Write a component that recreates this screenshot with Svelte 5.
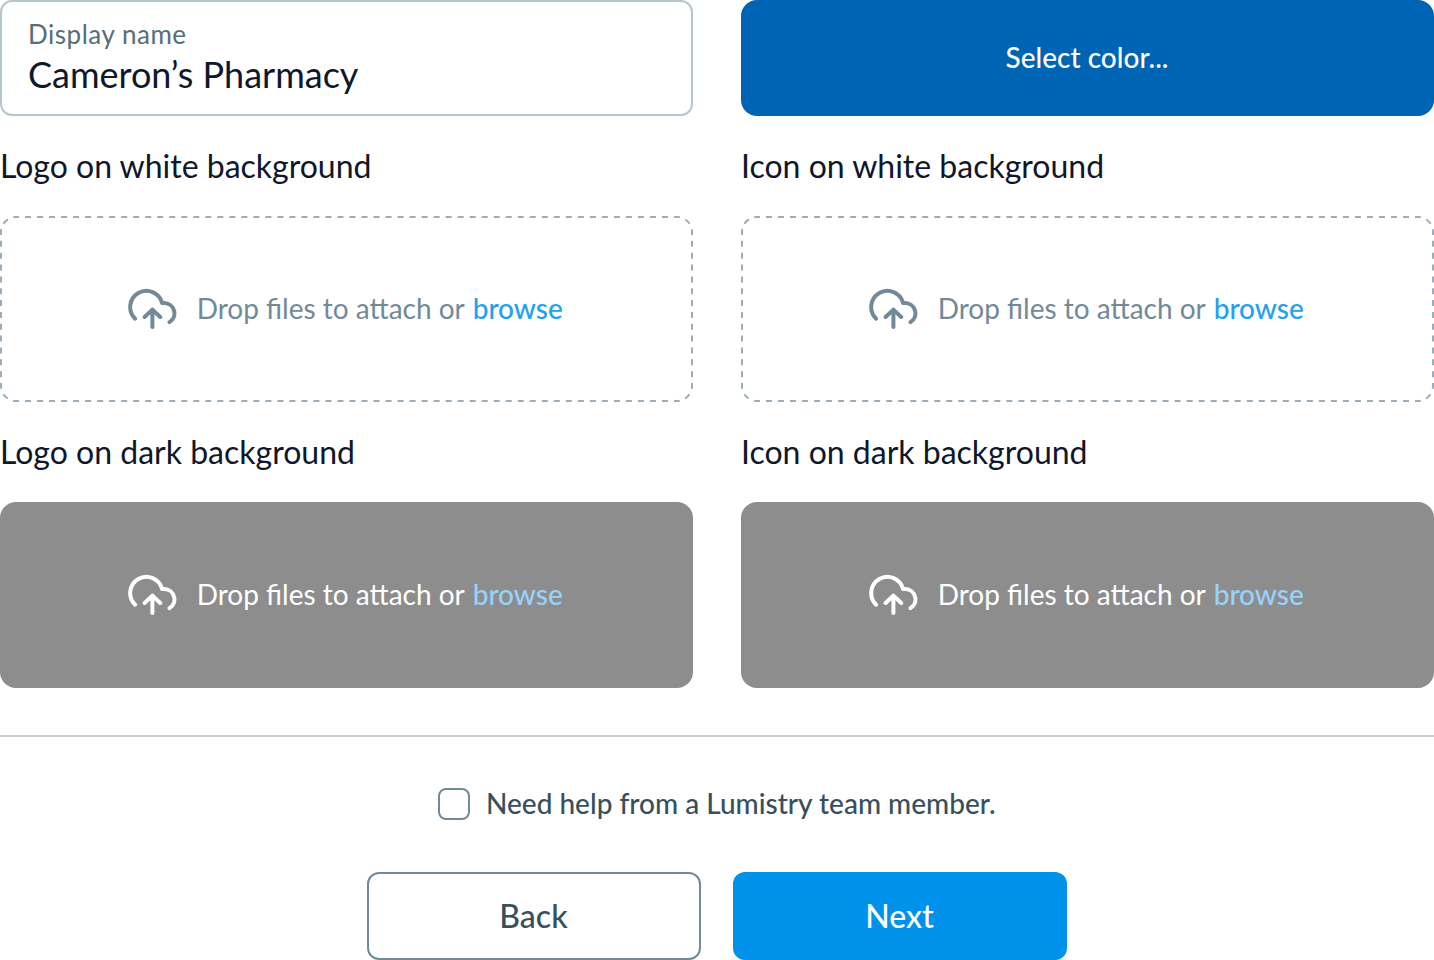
<script>
  const zones = [
    { title: 'Logo on white background', dark: false },
    { title: 'Icon on white background', dark: false },
    { title: 'Logo on dark background', dark: true },
    { title: 'Icon on dark background', dark: true },
  ];
</script>

<main>
  <div class="grid">
    <label class="field">
      <span class="caption">Display name</span>
      <span class="value">Cameron’s Pharmacy</span>
    </label>
    <button class="color">Select color...</button>

    {#each zones as zone}
      <section>
        <h2>{zone.title}</h2>
        <div class="drop" class:dark={zone.dark}>
          {#if !zone.dark}
            <svg class="outline" viewBox="0 0 693 186" aria-hidden="true">
              <path class="h" d="M16 1H677M16 185H677" />
              <path class="v" d="M1 16V170M692 16V170" />
              <path class="c" d="M1 16A15 15 0 0 1 16 1M677 1A15 15 0 0 1 692 16M692 170A15 15 0 0 1 677 185M16 185A15 15 0 0 1 1 170" />
            </svg>
          {/if}
          <svg class="cloud" viewBox="0 0 52 44" aria-hidden="true">
            <path d="M9.1 31.7A16.2 16.2 0 1 1 36.1 16.1H38.4A10.25 10.25 0 0 1 43.5 35.1M26.4 40V22.6M18.6 30L26.4 22.6L34.2 30" />
          </svg>
          <p>Drop files to attach or <a href="#browse">browse</a></p>
        </div>
      </section>
    {/each}
  </div>

  <hr />

  <label class="help"><span class="box"></span><span class="help-text">Need help from a Lumistry team member.</span></label>

  <div class="actions">
    <button class="back">Back</button>
    <button class="next">Next</button>
  </div>
</main>

<style>
  :global(body) {
    margin: 0;
    background: #fff;
  }
  main {
    width: 1434px;
    height: 960px;
    overflow: hidden;
    font-family: Lato, sans-serif;
    color: #0f172a;
    display: flex;
    flex-direction: column;
  }
  button {
    font-family: inherit;
    border: 0;
    padding: 0;
  }
  .grid {
    display: grid;
    grid-template-columns: 693px 693px;
    column-gap: 48px;
  }
  .field {
    box-sizing: border-box;
    height: 116px;
    border: 2px solid #b8c5cd;
    border-radius: 12px;
    padding: 16px 26px;
    display: flex;
    flex-direction: column;
  }
  .caption {
    font-size: 26px;
    line-height: 33px;
    letter-spacing: 0.52px;
    color: #546e7a;
  }
  .value {
    font-size: 36px;
    line-height: 46px;
  }
  .color {
    height: 116px;
    border-radius: 16px;
    background: #0064b4;
    color: #fff;
    font-size: 28px;
    font-weight: 500;
    padding: 0 1px 2px 0;
  }
  section {
    display: flex;
    flex-direction: column;
  }
  h2 {
    margin: 0;
    font-weight: 400;
    font-size: 32px;
    line-height: 40px;
    padding: 30px 0;
  }
  .drop {
    position: relative;
    height: 186px;
    border-radius: 16px;
    display: flex;
    align-items: center;
    padding-left: 126px;
    box-sizing: border-box;
    color: #728a98;
  }
  .drop.dark {
    background: #8d8d8d;
    color: #fff;
  }
  .outline {
    position: absolute;
    inset: 0;
    width: 693px;
    height: 186px;
    fill: none;
    stroke: #9aadb8;
    stroke-width: 2;
    stroke-dashoffset: 3;
  }
  .h {
    stroke-dasharray: 6 6.018;
  }
  .v {
    stroke-dasharray: 6 5.846;
  }
  .c {
    stroke-dasharray: 6 5.78;
  }
  .cloud {
    width: 52px;
    height: 44px;
    flex: none;
    fill: none;
    stroke: currentColor;
    stroke-width: 4;
    stroke-linecap: round;
    stroke-linejoin: round;
  }
  p {
    margin: 0 0 2px 18.7px;
    font-size: 28px;
    line-height: 40px;
    white-space: nowrap;
  }
  a {
    margin-left: 1.3px;
    color: #24a0ee;
    font-weight: 500;
    text-decoration: none;
  }
  .dark a {
    color: #98d2f8;
  }
  hr {
    width: 100%;
    margin: 47px 0 0;
    border: 0;
    height: 2px;
    background: #cccccc;
  }
  .help {
    margin-top: 47px;
    height: 40px;
    display: flex;
    align-items: center;
    padding-left: 438px;
    gap: 16px;
    font-size: 28px;
    font-weight: 500;
    color: #37505d;
  }
  .help-text {
    padding-bottom: 2px;
  }
  .box {
    box-sizing: border-box;
    width: 32px;
    height: 32px;
    border: 2px solid #728a98;
    border-radius: 8px;
  }
  .actions {
    margin-top: 48px;
    display: flex;
    justify-content: center;
    gap: 32px;
  }
  .actions button {
    box-sizing: border-box;
    width: 334px;
    height: 88px;
    border-radius: 12px;
    font-size: 32px;
    font-weight: 500;
    padding: 0 1px 2px 0;
  }
  .actions .back {
    background: #fff;
    border: 2px solid #728a98;
    color: #37505d;
  }
  .next {
    background: #0092ea;
    color: #fff;
  }
</style>
